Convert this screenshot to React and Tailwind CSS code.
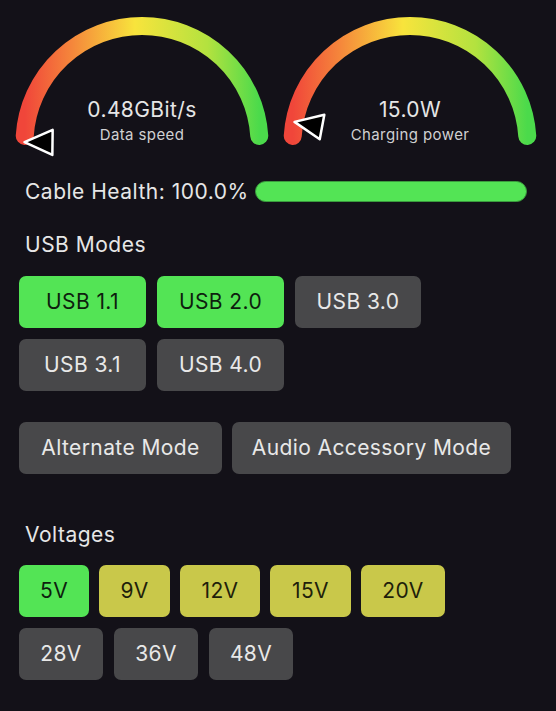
import React from 'react';

const FONT = { fontFamily: 'Inter, "Noto Sans", sans-serif' };

// arc geometry, shared by both gauges
const CX = 134;
const CY = 143.5;
const R = 117.5;

const Gauge = ({ id, value, label, angle }) => {
  const end = (3.7 * Math.PI) / 180;
  const sx = CX - R * Math.cos(end);
  const ex = CX + R * Math.cos(end);
  const ey = CY - R * Math.sin(end);
  const a = (angle * Math.PI) / 180;
  const tx = CX - R * Math.cos(a);
  const ty = CY - R * Math.sin(a);

  return (
    <svg width="268" height="165" viewBox="0 0 268 165" className="block shrink-0">
      <defs>
        <linearGradient id={id} x1="0" y1="0" x2="1" y2="0">
          <stop offset="0" stopColor="#f0463a" />
          <stop offset="0.2" stopColor="#f5863b" />
          <stop offset="0.47" stopColor="#f8e43c" />
          <stop offset="0.78" stopColor="#b3e23f" />
          <stop offset="1" stopColor="#4bda4b" />
        </linearGradient>
      </defs>
      <path
        d={`M ${sx} ${ey} A ${R} ${R} 0 0 1 ${ex} ${ey}`}
        fill="none"
        stroke={`url(#${id})`}
        strokeWidth="18"
        strokeLinecap="round"
      />
      <g transform={`translate(${tx} ${ty}) rotate(${angle})`}>
        <polygon
          points="0,0 28,-12.5 28,12.5"
          fill="#000"
          stroke="#fff"
          strokeWidth="2.5"
          strokeLinejoin="round"
        />
      </g>
      <text x={CX} y="117" textAnchor="middle" fill="#e6e6e6" fontSize="21" letterSpacing="0.4" style={FONT}>
        {value}
      </text>
      <text x={CX} y="140" textAnchor="middle" fill="#d0d0d2" fontSize="15" letterSpacing="0.4" style={FONT}>
        {label}
      </text>
    </svg>
  );
};

const tone = {
  on: 'bg-[#53e455] text-[#0e1f0e]',
  off: 'bg-[#48484a] text-[#e8e8e8]',
  warn: 'bg-[#c9c84a] text-[#1f1f0a]',
};

const Chip = ({ label, kind, w }) => (
  <div className={`h-[52px] ${w} ${tone[kind]} rounded-[7px] flex items-center justify-center text-[21px] tracking-[0.4px]`}>
    {label}
  </div>
);

export default function App() {
  return (
    <div className="w-[556px] h-[711px] bg-[#131118] overflow-hidden text-[#e6e6e6]" style={FONT}>
      {/* Gauges */}
      <div className="flex pl-[8px]">
        <Gauge id="g1" value="0.48GBit/s" label="Data speed" angle={0.7} />
        <Gauge id="g2" value="15.0W" label="Charging power" angle={10.6} />
      </div>

      {/* Cable health */}
      <div className="flex items-center mt-[16px] pl-[25px] pr-[29px] h-[21px]">
        <span className="text-[21px] tracking-[0.5px] leading-none whitespace-nowrap">Cable Health: 100.0%</span>
        <div className="flex-1 ml-[6px] h-[21px] rounded-full bg-[#53e455] border border-[#3a9c3d]" />
      </div>

      <div className="px-[19px]">
        <div className="pl-[6px] mt-[31px] text-[21px] tracking-[0.5px] leading-[24px]">USB Modes</div>

        <div className="flex flex-col gap-[11px] mt-[19px]">
          <div className="flex gap-[11px]">
            <Chip label="USB 1.1" kind="on" w="w-[127px]" />
            <Chip label="USB 2.0" kind="on" w="w-[127px]" />
            <Chip label="USB 3.0" kind="off" w="w-[126px]" />
          </div>
          <div className="flex gap-[11px]">
            <Chip label="USB 3.1" kind="off" w="w-[127px]" />
            <Chip label="USB 4.0" kind="off" w="w-[127px]" />
          </div>
        </div>

        <div className="flex gap-[10px] mt-[31px]">
          <Chip label="Alternate Mode" kind="off" w="w-[203px]" />
          <Chip label="Audio Accessory Mode" kind="off" w="w-[279px]" />
        </div>

        <div className="pl-[6px] mt-[49px] text-[21px] tracking-[0.5px] leading-[24px]">Voltages</div>

        <div className="flex flex-col gap-[11px] mt-[18px]">
          <div className="flex gap-[10px]">
            <Chip label="5V" kind="on" w="w-[70px]" />
            <Chip label="9V" kind="warn" w="w-[71px]" />
            <Chip label="12V" kind="warn" w="w-[80px]" />
            <Chip label="15V" kind="warn" w="w-[81px]" />
            <Chip label="20V" kind="warn" w="w-[84px]" />
          </div>
          <div className="flex gap-[11px]">
            <Chip label="28V" kind="off" w="w-[84px]" />
            <Chip label="36V" kind="off" w="w-[84px]" />
            <Chip label="48V" kind="off" w="w-[84px]" />
          </div>
        </div>
      </div>
    </div>
  );
}
